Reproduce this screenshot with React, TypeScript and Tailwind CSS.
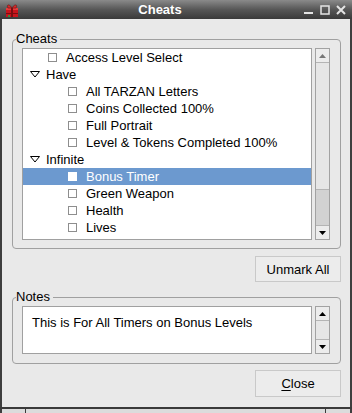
import React from 'react';

type Row = { label: string; kind: 'group' | 'top' | 'child'; selected?: boolean };

const rows: Row[] = [
  { label: 'Access Level Select', kind: 'top' },
  { label: 'Have', kind: 'group' },
  { label: 'All TARZAN Letters', kind: 'child' },
  { label: 'Coins Collected 100%', kind: 'child' },
  { label: 'Full Portrait', kind: 'child' },
  { label: 'Level & Tokens Completed 100%', kind: 'child' },
  { label: 'Infinite', kind: 'group' },
  { label: 'Bonus Timer', kind: 'child', selected: true },
  { label: 'Green Weapon', kind: 'child' },
  { label: 'Health', kind: 'child' },
  { label: 'Lives', kind: 'child' },
];

const UpArrow = ({ color = '#000' }: { color?: string }) => (
  <svg width="7" height="4" viewBox="0 0 7 4">
    <path d="M0 4 L3.5 0 L7 4 Z" fill={color} />
  </svg>
);

const DownArrow = ({ color = '#000' }: { color?: string }) => (
  <svg width="7" height="4" viewBox="0 0 7 4">
    <path d="M0 0 L7 0 L3.5 4 Z" fill={color} />
  </svg>
);

const Expander = () => (
  <svg width="10" height="7" viewBox="0 0 10 7">
    <path d="M0.5 0.5 H9.5 L5 6 Z" fill="none" stroke="#000" strokeWidth="1" />
  </svg>
);

const Checkbox = ({ selected }: { selected?: boolean }) => (
  <span
    className={`block w-[9px] h-[9px] border ${selected ? 'bg-white border-white' : 'bg-white border-[#8e8e8e]'}`}
  />
);

const Scrollbar = ({ height, thumb, upColor }: { height: string; thumb?: boolean; upColor?: string }) => (
  <div className={`w-[15px] ${height} border border-[#a2a2a2] bg-[#e6e6e6] flex flex-col`}>
    <div className="h-[14px] flex items-center justify-center border-b border-[#b4b4b4] bg-[#ececec]">
      <UpArrow color={upColor} />
    </div>
    <div className="flex-1" />
    {thumb && <div className="h-[36px] bg-[#d2d2d2] border-t border-[#b4b4b4]" />}
    <div className="h-[14px] flex items-center justify-center border-t border-[#b4b4b4] bg-[#ececec]">
      <DownArrow />
    </div>
  </div>
);

const GiftIcon = () => (
  <svg width="16" height="16" viewBox="0 0 16 16">
    <rect x="2" y="6" width="12" height="9" fill="#c8141c" />
    <rect x="2" y="6" width="12" height="2" fill="#e83a3a" />
    <rect x="7" y="6" width="2" height="9" fill="#7a0d10" />
    <rect x="2" y="11" width="12" height="1" fill="#7a0d10" />
    <path d="M8 6 C5 1 2 3 4 6 Z" fill="#d62a2a" stroke="#6a1a1a" strokeWidth="0.7" />
    <path d="M8 6 C11 1 14 3 12 6 Z" fill="#d62a2a" stroke="#6a1a1a" strokeWidth="0.7" />
    <rect x="4" y="13" width="2" height="2" fill="#3a8a3a" />
  </svg>
);

const App = () => {
  return (
    <div className="w-[352px] h-[413px] bg-[#e9e9e9] flex flex-col overflow-hidden text-[13px] leading-[17px] text-black font-['Liberation_Sans',Arial,sans-serif]">
      {/* Title bar */}
      <div className="h-[19px] flex items-center bg-gradient-to-b from-[#8a8a8a] via-[#575757] to-[#3a3a3a] text-white">
        <div className="w-[22px] flex justify-center pl-[2px]">
          <GiftIcon />
        </div>
        <div className="flex-1 text-center font-bold leading-[19px] pr-[6px]">Cheats</div>
        <div className="flex items-center gap-[6px] pr-[6px] text-[#e4e4e4]">
          <svg width="10" height="10" viewBox="0 0 10 10">
            <rect x="0" y="7" width="9" height="2" fill="#e4e4e4" />
          </svg>
          <svg width="10" height="10" viewBox="0 0 10 10">
            <rect x="1" y="1" width="8" height="8" fill="none" stroke="#e4e4e4" strokeWidth="1.5" />
          </svg>
          <svg width="10" height="10" viewBox="0 0 10 10">
            <path d="M1 1 L9 9 M9 1 L1 9" stroke="#e4e4e4" strokeWidth="2" />
          </svg>
        </div>
      </div>

      {/* Body */}
      <div className="flex-1 flex flex-col border-x-2 border-[#3e3e3e] pl-[10px] pr-[9px] pt-[12px]">
        <fieldset className="border border-[#a0a0a0] rounded-[4px] pl-[3px] pr-[10px] pt-px pb-[8px]">
          <legend className="px-0 pr-[3px] leading-[16px]">Cheats</legend>
          <div className="pl-[6px] flex gap-[3px]">
            <div className="w-[290px] h-[192px] border border-[#a0a0a0] bg-white overflow-hidden">
              {rows.map((row) => (
                <div
                  key={row.label}
                  className={`h-[17px] flex items-center whitespace-nowrap ${row.selected ? 'bg-[#6c99cf] text-white' : ''}`}
                >
                  {row.kind === 'group' && (
                    <>
                      <span className="w-[7px]" />
                      <Expander />
                      <span className="ml-[6px]">{row.label}</span>
                    </>
                  )}
                  {row.kind === 'top' && (
                    <>
                      <span className="w-[25px]" />
                      <Checkbox />
                      <span className="ml-[9px]">{row.label}</span>
                    </>
                  )}
                  {row.kind === 'child' && (
                    <>
                      <span className="w-[45px]" />
                      <Checkbox selected={row.selected} />
                      <span className="ml-[9px]">{row.label}</span>
                    </>
                  )}
                </div>
              ))}
            </div>
            <Scrollbar height="h-[192px]" thumb upColor="#777" />
          </div>
        </fieldset>

        <div className="flex justify-end mt-[7px]">
          <button className="w-[86px] h-[26px] border border-[#c9c9c9] bg-[#ececec] text-[13px]">
            Unmark All
          </button>
        </div>

        <fieldset className="mt-[7px] border border-[#a0a0a0] rounded-[4px] pl-[3px] pr-[10px] pt-px pb-[9px]">
          <legend className="px-0 pr-[3px] leading-[16px]">Notes</legend>
          <div className="pl-[6px] flex gap-[3px]">
            <div className="w-[290px] h-[48px] border border-[#a0a0a0] bg-white pl-[9px] pt-[7px] whitespace-nowrap">
              This is For All Timers on Bonus Levels
            </div>
            <Scrollbar height="h-[48px]" />
          </div>
        </fieldset>

        <div className="flex justify-end mt-[6px]">
          <button className="w-[86px] h-[27px] border border-[#c9c9c9] bg-[#ececec] text-[13px]">
            <span className="underline underline-offset-2">C</span>lose
          </button>
        </div>
      </div>

      {/* Bottom frame */}
      <div className="h-[6px] flex flex-col">
        <div className="h-[2px] bg-[#3a3a3a]" />
        <div className="flex-1 flex bg-[#dcdcdc] border-x-2 border-[#3e3e3e]">
          <div className="w-[24px] border-r border-[#3a3a3a]" />
          <div className="flex-1 border-r border-[#3a3a3a]" />
          <div className="w-[24px]" />
        </div>
      </div>
    </div>
  );
};

export default App;
